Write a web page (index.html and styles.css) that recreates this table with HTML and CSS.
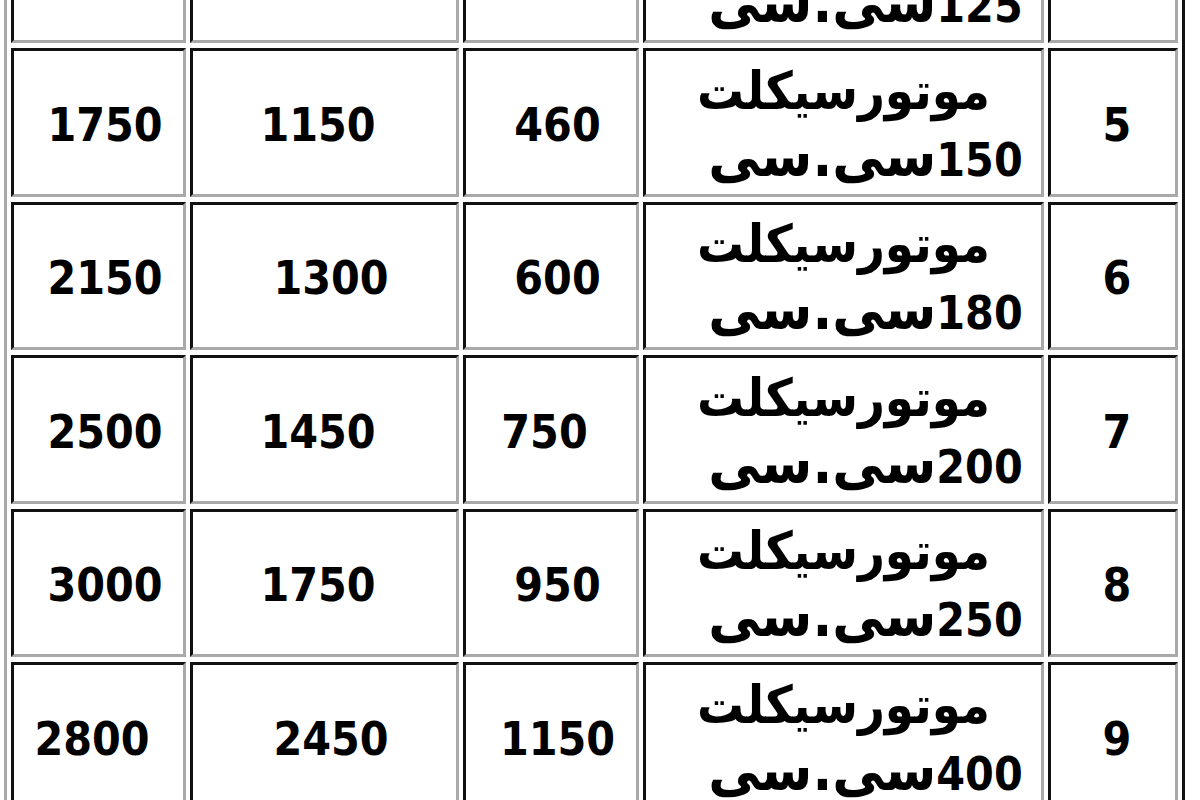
FILE: index.html
```html
<!DOCTYPE html>
<html lang="fa">
<head>
<meta charset="utf-8">
<title>قیمت موتورسیکلت</title>
<link rel="stylesheet" href="styles.css">
</head>
<body>
<div class="sheet">
<table class="prices" dir="rtl">
<colgroup>
<col class="c-no"><col class="c-name"><col class="c-v1"><col class="c-v2"><col class="c-v3">
</colgroup>
<tr>
<td class="no">4</td>
<td class="name"><span class="fa">موتورسیکلت</span><br><span class="cc">125<span class="fa2">سی.سی</span></span></td>
<td class="pl">350</td>
<td class="pr">1000</td>
<td class="pl">1450</td>
</tr>
<tr>
<td class="no">5</td>
<td class="name"><span class="fa">موتورسیکلت</span><br><span class="cc">150<span class="fa2">سی.سی</span></span></td>
<td class="pl">460</td>
<td class="pr">1150</td>
<td class="pl">1750</td>
</tr>
<tr>
<td class="no">6</td>
<td class="name"><span class="fa">موتورسیکلت</span><br><span class="cc">180<span class="fa2">سی.سی</span></span></td>
<td class="pl">600</td>
<td class="pl">1300</td>
<td class="pl">2150</td>
</tr>
<tr>
<td class="no">7</td>
<td class="name"><span class="fa">موتورسیکلت</span><br><span class="cc">200<span class="fa2">سی.سی</span></span></td>
<td class="pr">750</td>
<td class="pr">1450</td>
<td class="pl">2500</td>
</tr>
<tr>
<td class="no">8</td>
<td class="name"><span class="fa">موتورسیکلت</span><br><span class="cc">250<span class="fa2">سی.سی</span></span></td>
<td class="pl">950</td>
<td class="pr">1750</td>
<td class="pl">3000</td>
</tr>
<tr>
<td class="no">9</td>
<td class="name"><span class="fa">موتورسیکلت</span><br><span class="cc">400<span class="fa2">سی.سی</span></span></td>
<td class="pl">1150</td>
<td class="pl">2450</td>
<td class="pr">2800</td>
</tr>
</table>
</div>
</body>
</html>
```

FILE: styles.css
```css
html, body {
  margin: 0;
  padding: 0;
  background: #ffffff;
}

.sheet {
  width: 1200px;
  height: 800px;
  overflow: hidden;
}

.prices {
  margin: -113.5px 0 0 4px;
  width: 1181px;
  table-layout: fixed;
  border-collapse: separate;
  border-spacing: 4px 5px;
  border-style: solid;
  border-width: 3px;
  border-color: #a9a9a9 #111111 #111111 #a9a9a9;
  font-family: "DejaVu Sans", "Noto Sans", sans-serif;
  font-stretch: condensed;
  font-weight: bold;
  font-size: 46px;
  color: #000000;
}

.c-no { width: 130px; }
.c-name { width: 401px; }
.c-v1 { width: 176px; }
.c-v2 { width: 269px; }
.c-v3 { width: 175px; }

.prices td {
  box-sizing: border-box;
  height: 148.5px;
  padding: 6px 0 0 0;
  border-style: solid;
  border-width: 3px;
  border-color: #111111 #a9a9a9 #a9a9a9 #111111;
  text-align: center;
  vertical-align: middle;
  line-height: 1.2;
}

.prices td.pl { padding-left: 13px; }
.prices td.pr { padding-right: 13px; }
.prices td.no { padding-left: 8px; }

.prices td.name {
  padding-top: 8.5px;
  line-height: 67px;
}

.fa {
  font-size: 52px;
  line-height: 0;
}

.fa2 {
  font-size: 58px;
  line-height: 0;
}

.cc {
  padding-left: 44px;
}
```
